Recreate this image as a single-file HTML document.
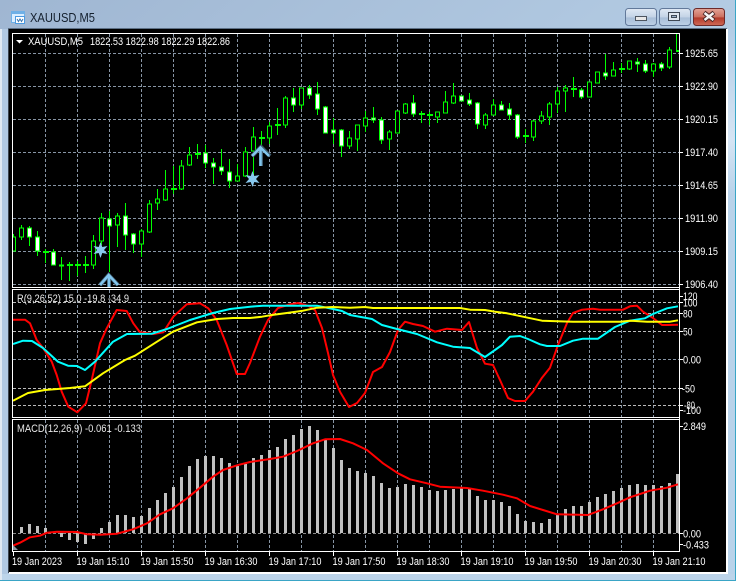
<!DOCTYPE html>
<html><head><meta charset="utf-8"><title>XAUUSD,M5</title>
<style>
html,body{margin:0;padding:0;background:#fff}
svg{display:block}
text{font-family:"Liberation Sans",sans-serif;font-size:11px;fill:#fff}
</style></head><body>
<svg width="737" height="582" viewBox="0 0 737 582" xmlns="http://www.w3.org/2000/svg">
<defs>
<linearGradient id="tb" x1="0" y1="0" x2="1" y2="1"><stop offset="0" stop-color="#9fb6d2"/><stop offset=".5" stop-color="#b3cbe3"/><stop offset="1" stop-color="#bcd4ea"/></linearGradient>
<linearGradient id="bt" x1="0" y1="0" x2="0" y2="1"><stop offset="0" stop-color="#e0e9f4"/><stop offset=".5" stop-color="#c3d3e6"/><stop offset=".55" stop-color="#a9bfd8"/><stop offset="1" stop-color="#bdd0e6"/></linearGradient>
<linearGradient id="cl" x1="0" y1="0" x2="0" y2="1"><stop offset="0" stop-color="#e3a598"/><stop offset=".5" stop-color="#cc6f5f"/><stop offset=".55" stop-color="#b33a2a"/><stop offset="1" stop-color="#cf6a58"/></linearGradient>
<linearGradient id="sd" x1="0" y1="0" x2="0" y2="1"><stop offset="0" stop-color="#b3cde6"/><stop offset=".2" stop-color="#d6e5f4"/><stop offset=".3" stop-color="#b9d3ea"/><stop offset="1" stop-color="#b9d3ea"/></linearGradient>
<clipPath id="cm"><rect x="13" y="34" width="666" height="253"/></clipPath>
<clipPath id="cr"><rect x="13" y="290" width="666" height="127"/></clipPath>
</defs>

<!-- window frame -->
<rect width="737" height="582" fill="#fff"/>
<rect x="0" y="0" width="735" height="581" fill="url(#tb)"/>
<rect x="0" y="29" width="2" height="551" fill="#dfe8f2"/>
<rect x="2" y="29" width="7" height="551" fill="#b0c8e2"/>
<rect x="728" y="29" width="7" height="551" fill="url(#sd)"/>
<rect x="2" y="574" width="733" height="6" fill="#bcd4ea"/>
<rect x="0" y="580" width="735" height="1" fill="#3aa5c6"/>
<rect x="735" y="0" width="1" height="581" fill="#3aa5c6"/>
<rect x="9" y="29" width="719" height="545" fill="#fff"/>
<rect x="9" y="29" width="717" height="543" fill="#000"/>
<rect x="8" y="29" width="1" height="544" fill="#39424e"/>
<rect x="8" y="28" width="719" height="1" fill="#5c6f85"/>

<!-- title icon -->
<path d="M11.500 11.500h13v11h-13z" fill="#dbeeff" stroke="#6fb0e6"/>
<path d="M11.500 11.500h13v2h-13z" fill="#6fb0e6" stroke="#6fb0e6"/>
<path d="M15.500 16.500h9v7h-9z" fill="#fff" stroke="#4c9ae0"/>
<path d="M17 19l1.500 2.500 1.500-2.500 1.500 2.500 1.500-2.500" fill="none" stroke="#3a76b0"/>
<text x="30" y="22" style="font-size:13px;fill:#14202e" textLength="65" lengthAdjust="spacingAndGlyphs">XAUUSD,M5</text>

<!-- window buttons -->
<rect x="625.500" y="8.500" width="31" height="17" rx="3" fill="url(#bt)" stroke="#62799a"/>
<rect x="635.500" y="16.500" width="11" height="4" fill="#e8e8e8" stroke="#4d5560"/>
<rect x="659.500" y="8.500" width="31" height="17" rx="3" fill="url(#bt)" stroke="#62799a"/>
<rect x="668.500" y="12.500" width="11" height="8" fill="#dfe6ee" stroke="#3f4854" stroke-width="1"/>
<rect x="671.500" y="15.500" width="5" height="2" fill="#9fb3ca" stroke="#3f4854"/>
<rect x="693.500" y="8.500" width="31" height="17" rx="3" fill="url(#cl)" stroke="#6d2a2a"/>
<path d="M704 12.500l5 4 5-4M704 20.500l5-4 5 4" fill="none" stroke="#4a2626" stroke-width="4.500"/>
<path d="M704.500 13l4.500 3.500 4.500-3.500M704.500 20l4.500-3.500 4.500 3.500" fill="none" stroke="#f4f4f4" stroke-width="2.500"/>

<!-- vertical grid -->
<g stroke="#8795a5" stroke-width="1" stroke-dasharray="3 2" fill="none">
<path d="M45.500 34V287M77.500 34V287M109.500 34V287M141.500 34V287M173.500 34V287M205.500 34V287M237.500 34V287M269.500 34V287M301.500 34V287M333.500 34V287M365.500 34V287M397.500 34V287M429.500 34V287M461.500 34V287M493.500 34V287M525.500 34V287M557.500 34V287M589.500 34V287M621.500 34V287M653.500 34V287"/>
<path d="M45.500 290V417M77.500 290V417M109.500 290V417M141.500 290V417M173.500 290V417M205.500 290V417M237.500 290V417M269.500 290V417M301.500 290V417M333.500 290V417M365.500 290V417M397.500 290V417M429.500 290V417M461.500 290V417M493.500 290V417M525.500 290V417M557.500 290V417M589.500 290V417M621.500 290V417M653.500 290V417"/>
<path d="M45.500 420V551M77.500 420V551M109.500 420V551M141.500 420V551M173.500 420V551M205.500 420V551M237.500 420V551M269.500 420V551M301.500 420V551M333.500 420V551M365.500 420V551M397.500 420V551M429.500 420V551M461.500 420V551M493.500 420V551M525.500 420V551M557.500 420V551M589.500 420V551M621.500 420V551M653.500 420V551"/>
<path d="M13 53.500H679M13 86.500H679M13 119.500H679M13 152.500H679M13 185.500H679M13 218.500H679M13 251.500H679M13 284.500H679"/>
</g>
<g stroke="#bcbcbc" stroke-width="1" stroke-dasharray="3 2" fill="none">
<path d="M13 302.500H679M13 313.500H679M13 331.500H679M13 388.500H679M13 405.500H679"/>
<path d="M13 359.500H679" stroke="#8795a5"/>
<path d="M13 533.500H679" stroke="#8a8a8a"/>
</g>

<!-- candles -->
<g clip-path="url(#cm)" fill="none" stroke="#00ff00" stroke-width="1" shape-rendering="crispEdges">
<path d="M13.500 234V251M21.500 225V240M29.500 226V246M37.500 231V256M45.500 249V263M53.500 249V265M61.500 257V280M69.500 262V281M77.500 261V276M85.500 256V273M93.500 235V269M101.500 213V245M109.500 211V272M117.500 213V247M125.500 203V250M133.500 233V253M141.500 229V257M149.500 200V233M157.500 189V210M165.500 170V201M173.500 166V194M181.500 160V190M189.500 147V166M197.500 144V159M205.500 145V168M213.500 158V184M221.500 149V175M229.500 159V188M237.500 164V181M245.500 147V177M253.500 127V177M261.500 131V145M269.500 122V144M277.500 108V135M285.500 96V128M293.500 88V112M301.500 88V109M309.500 85V99M317.500 82V115M325.500 106V133M333.500 118V144M341.500 129V157M349.500 131V149M357.500 125V151M365.500 111V132M373.500 107V123M381.500 117V144M389.500 130V150M397.500 111V133M405.500 103V114M413.500 95V117M421.500 111V123M429.500 112V125M437.500 112V123M445.500 91V113M453.500 83V104M461.500 96V101M469.500 93V106M477.500 102V129M485.500 113V129M493.500 99V115M501.500 101V110M509.500 103V120M517.500 114V139M525.500 129V143M533.500 120V141M541.500 111V124M549.500 102V125M557.500 87V113M565.500 85V112M573.500 77V97M581.500 88V99M589.500 82V97M597.500 72V83M605.500 54V80M613.500 62V76M621.500 63V73M629.500 61V70M637.500 58V72M645.500 60V73M653.500 63V77M661.500 62V71M669.500 47V69M676.500 34V51"/>
<!-- hollow bodies -->
<path fill="#000" d="M11.500 237h4v14h-4zM19.500 228h4v9h-4zM91.500 241h4v24h-4zM99.500 218h4v23h-4zM115.500 216h4v9h-4zM139.500 231h4v13h-4zM147.500 204h4v28h-4zM155.500 199h4v4h-4zM163.500 189h4v11h-4zM179.500 166h4v23h-4zM187.500 155h4v10h-4zM235.500 176h4v5h-4zM243.500 152h4v24h-4zM251.500 137h4v14h-4zM267.500 126h4v12h-4zM283.500 98h4v27h-4zM299.500 88h4v17h-4zM347.500 138h4v8h-4zM355.500 125h4v14h-4zM363.500 118h4v8h-4zM387.500 132h4v7h-4zM395.500 111h4v22h-4zM403.500 104h4v9h-4zM435.500 112h4v5h-4zM443.500 102h4v11h-4zM451.500 96h4v7h-4zM483.500 115h4v10h-4zM491.500 105h4v10h-4zM531.500 121h4v16h-4zM539.500 116h4v5h-4zM547.500 104h4v13h-4zM555.500 91h4v13h-4zM563.500 88h4v3h-4zM587.500 82h4v15h-4zM595.500 72h4v11h-4zM611.500 70h4v6h-4zM627.500 61h4v8h-4zM651.500 64h4v7h-4zM667.500 50h4v17h-4z"/>
<!-- white bodies -->
<path fill="#fff" d="M27.500 228h4v9h-4zM35.500 237h4v14h-4zM51.500 252h4v13h-4zM107.500 219h4v7h-4zM123.500 216h4v19h-4zM131.500 234h4v10h-4zM203.500 153h4v10h-4zM211.500 163h4v4h-4zM219.500 167h4v4h-4zM227.500 172h4v9h-4zM291.500 98h4v7h-4zM307.500 88h4v7h-4zM315.500 94h4v15h-4zM323.500 107h4v26h-4zM331.500 130h4v3h-4zM339.500 130h4v16h-4zM371.500 118h4v2h-4zM379.500 120h4v20h-4zM411.500 103h4v11h-4zM459.500 96h4v5h-4zM467.500 100h4v4h-4zM475.500 103h4v21h-4zM499.500 105h4v5h-4zM507.500 109h4v6h-4zM515.500 115h4v22h-4zM579.500 90h4v7h-4zM603.500 73h4v3h-4zM635.500 62h4v2h-4zM643.500 64h4v7h-4zM659.500 64h4v4h-4z"/>
<!-- doji -->
<path stroke-width="2" d="M43 252h6M59 265.500h5M67 265h6M75 265h6M83 265h6M171 189h6M195 154h6M259 138h6M275 125h6M419 114h6M427 115h6M523 136h6M571 89h6M619 69h6M676 51h4"/>
</g>

<!-- stars -->
<path d="M100.500 242L102.300 247 107.500 246 104 250 107.500 254 102.300 253 100.500 258 98.700 253 93.500 254 97 250 93.500 246 98.700 247z" fill="#88c8ee"/>
<path d="M252.500 171L254.300 176 259.500 175 256 179 259.500 183 254.300 182 252.500 187 250.700 182 245.500 183 249 179 245.500 175 250.700 176z" fill="#88c8ee"/>
<!-- arrows -->
<g fill="none">
<path d="M109 287V276M100 285L108.700 275L118 285" stroke="#3d5a6c" stroke-width="4"/>
<path d="M109 287V276M100 285L108.700 275L118 285" stroke="#82c6ee" stroke-width="2.500"/>
<path d="M261 166V149M252 156L261 147L270 156" stroke="#3d5a6c" stroke-width="4"/>
<path d="M260.500 166V149M252 156L260.500 147.500L269 156" stroke="#82c6ee" stroke-width="2.500"/>
</g>

<!-- RSI lines -->
<g clip-path="url(#cr)" fill="none" stroke-width="2" stroke-linejoin="round">
<polyline stroke="#ff0000" points="13,319.700 25,319.700 30,323.300 36.700,340 43.300,348.300 51.700,361.700 56.700,375 61.700,391.700 68.300,406.700 77.300,412.300 86,403.300 91.700,380 100,343.300 106.700,328.300 116.700,310 126.700,311 133.300,323.300 140,332.300 153.300,334 163.300,332.300 173.300,316.700 186.700,304.300 200,303.300 208.300,308.300 216.700,320 226.700,345 236.700,374 245,374 250,363 260,336.700 268,320 278,308 290,304.300 298,303 308,305.700 315,310 322,328 328,353 333,375 340,391.700 349,407 357,403 365,393 373,372 382,367 390,352 398,330 405,321.700 413,324 423,326 435,331.700 447,328.700 462,330 469,322 477,348 485,363.700 493,365 500,380 508,398 515,401 525,401 533,391.700 542,377.700 550,367.700 558,345 567,323 573,313 582,309.700 593,308.700 600,309.700 623,309.700 630,306.300 637,305.700 643,311.700 653,318 662,325 668,325 678,324.700"/>
<polyline stroke="#00ffff" points="13,344 23,340.700 32,341 43,348 58,361.700 68,365.700 77,366 85,370 95,361.700 113,341.700 127,334 152,333.700 167,329 190,320 213,313 230,309 250,306.700 263,305.700 317,305.700 333,309 342,311 350,315 372,319 382,325 397,329 417,334 437,342.300 453,346.700 470,348 485,357 495,350 502,345 510,336.700 520,336 528,339 540,344.300 547,346 560,346 573,340.700 583,338.700 598,338.700 615,327 630,320.700 645,318.300 653,314 667,308.300 678,306.300"/>
<polyline stroke="#ffff00" points="13,400.700 28,393 45,390 70,388 85,386.300 103,373.300 125,360 135,355.700 157,341.700 173,331.700 197,322.300 217,319 233,318 250,318 262,316.700 270,315.300 285,313.300 303,310.700 317,307.700 333,307 350,307.700 365,307 373,308 460,308 470,309.700 485,310 495,311.700 507,313.300 523,316.700 542,320.700 573,321.700 620,321.700 630,320.700 647,321.700 670,321.700 678,320.300"/>
</g>

<!-- MACD bars -->
<path fill="none" stroke="#c0c0c0" stroke-width="3" d="M21.500 527V533M29.500 524V533M37.500 526V533M45.500 528V533M53.500 532V533M61.500 533V537M69.500 533V540M77.500 533V542M85.500 533V544M93.500 533V539M101.500 528V533M109.500 522V533M117.500 515V533M125.500 515V533M133.500 517V533M141.500 516V533M149.500 508V533M157.500 500V533M165.500 493V533M173.500 487V533M181.500 477V533M189.500 466V533M197.500 459V533M205.500 456V533M213.500 456V533M221.500 458V533M229.500 463V533M237.500 466V533M245.500 464V533M253.500 458V533M261.500 455V533M269.500 450V533M277.500 447V533M285.500 439V533M293.500 435V533M301.500 429V533M309.500 426V533M317.500 430V533M325.500 440V533M333.500 448V533M341.500 460V533M349.500 468V533M357.500 471V533M365.500 473V533M373.500 476V533M381.500 483V533M389.500 488V533M397.500 487V533M405.500 484V533M413.500 485V533M421.500 487V533M429.500 490V533M437.500 491V533M445.500 490V533M453.500 489V533M461.500 488V533M469.500 489V533M477.500 496V533M485.500 500V533M493.500 500V533M501.500 502V533M509.500 506V533M517.500 514V533M525.500 521V533M533.500 522V533M541.500 523V533M549.500 519V533M557.500 515V533M565.500 509V533M573.500 506V533M581.500 506V533M589.500 502V533M597.500 497V533M605.500 494V533M613.500 491V533M621.500 488V533M629.500 485V533M637.500 484V533M645.500 485V533M653.500 485V533M661.500 486V533M669.500 483V533M677.500 474V533"/>
<polyline fill="none" stroke="#ff0000" stroke-width="2" stroke-linejoin="round" points="13,545.700 20,542.700 30,537.300 40,535.700 47,532.700 57,531.700 77,532 87,534.300 100,534.700 117,533.700 133,529.300 147,523.300 160,514.300 173,508.300 187,498.300 200,487.700 213,476.700 223,470 237,465.300 250,462 270,459 283,456.700 297,451 313,443.300 325,439.300 340,439 353,443.300 367,450 383,463.300 398,473.300 410,479.300 427,483.300 440,486.700 467,488 483,490.700 503,494.700 517,498.300 530,506 543,510 557,514.300 588,515 603,509.300 617,503.300 630,497.300 650,490.700 667,487.700 678,484.300"/>
<path d="M13 545L18 550H13z" fill="#8a949e"/>

<!-- panel borders -->
<g fill="#fff" shape-rendering="crispEdges">
<rect x="12" y="33" width="668" height="1"/>
<rect x="12" y="33" width="1" height="255"/>
<rect x="12" y="287" width="668" height="1"/>
<rect x="12" y="289" width="668" height="1"/>
<rect x="12" y="289" width="1" height="129"/>
<rect x="12" y="417" width="668" height="1"/>
<rect x="12" y="419" width="668" height="1"/>
<rect x="12" y="419" width="1" height="133"/>
<rect x="12" y="551" width="668" height="1"/>
<rect x="679" y="33" width="1" height="519"/>
<!-- price ticks -->
<path d="M680 53h3v1h-3zM680 86h3v1h-3zM680 119h3v1h-3zM680 152h3v1h-3zM680 185h3v1h-3zM680 218h3v1h-3zM680 251h3v1h-3zM680 284h3v1h-3zM680 296h3v1h-3zM680 302h3v1h-3zM680 313h3v1h-3zM680 331h3v1h-3zM680 359h3v1h-3zM680 388h3v1h-3zM680 405h3v1h-3zM680 410h3v1h-3zM680 426h3v1h-3zM680 533h3v1h-3zM680 544h3v1h-3z"/>
<!-- time ticks -->
<path d="M13 552h1v4h-1zM77 552h1v4h-1zM141 552h1v4h-1zM205 552h1v4h-1zM269 552h1v4h-1zM333 552h1v4h-1zM397 552h1v4h-1zM461 552h1v4h-1zM525 552h1v4h-1zM589 552h1v4h-1zM653 552h1v4h-1z"/>
</g>

<!-- legend -->
<path d="M16 40h7l-3.500 3.500z" fill="#fff"/>
<text x="28" y="45" textLength="55" lengthAdjust="spacingAndGlyphs">XAUUSD,M5</text>
<text x="90" y="45" textLength="140" lengthAdjust="spacingAndGlyphs">1822.53 1822.98 1822.29 1822.86</text>
<text x="17" y="302" textLength="112" lengthAdjust="spacingAndGlyphs" style="fill:#e8e8e8">R(9,26,52) 15.0 -19.8 -34.9</text>
<text x="17" y="432" textLength="124" lengthAdjust="spacingAndGlyphs" style="fill:#e8e8e8">MACD(12,26,9) -0.061 -0.133</text>

<!-- price labels -->
<g lengthAdjust="spacingAndGlyphs">
<text x="685" y="57" textLength="33" lengthAdjust="spacingAndGlyphs">1925.65</text>
<text x="685" y="90" textLength="33" lengthAdjust="spacingAndGlyphs">1922.90</text>
<text x="685" y="123" textLength="33" lengthAdjust="spacingAndGlyphs">1920.15</text>
<text x="685" y="156" textLength="33" lengthAdjust="spacingAndGlyphs">1917.40</text>
<text x="685" y="189" textLength="33" lengthAdjust="spacingAndGlyphs">1914.65</text>
<text x="685" y="222" textLength="33" lengthAdjust="spacingAndGlyphs">1911.90</text>
<text x="685" y="255" textLength="33" lengthAdjust="spacingAndGlyphs">1909.15</text>
<text x="685" y="288" textLength="33" lengthAdjust="spacingAndGlyphs">1906.40</text>
<text x="683" y="300" textLength="14.500" lengthAdjust="spacingAndGlyphs">120</text>
<text x="683" y="306.500" textLength="14.500" lengthAdjust="spacingAndGlyphs">100</text>
<text x="683" y="317.500" textLength="9.500" lengthAdjust="spacingAndGlyphs">80</text>
<text x="683" y="335.500" textLength="9.500" lengthAdjust="spacingAndGlyphs">50</text>
<text x="683" y="363.500" textLength="18" lengthAdjust="spacingAndGlyphs">0.00</text>
<text x="682" y="392.500" textLength="13" lengthAdjust="spacingAndGlyphs">-50</text>
<text x="684" y="409" textLength="11" lengthAdjust="spacingAndGlyphs">-80</text>
<text x="683" y="414" textLength="18" lengthAdjust="spacingAndGlyphs">-100</text>
<text x="683" y="430" textLength="23" lengthAdjust="spacingAndGlyphs">2.849</text>
<text x="683" y="537.500" textLength="18" lengthAdjust="spacingAndGlyphs">0.00</text>
<text x="683" y="548.500" textLength="26" lengthAdjust="spacingAndGlyphs">-0.433</text>
</g>

<!-- time labels -->
<g>
<text x="12" y="565" textLength="50" lengthAdjust="spacingAndGlyphs">19 Jan 2023</text>
<text x="76.500" y="565" textLength="53" lengthAdjust="spacingAndGlyphs">19 Jan 15:10</text>
<text x="140.500" y="565" textLength="53" lengthAdjust="spacingAndGlyphs">19 Jan 15:50</text>
<text x="204.500" y="565" textLength="53" lengthAdjust="spacingAndGlyphs">19 Jan 16:30</text>
<text x="268.500" y="565" textLength="53" lengthAdjust="spacingAndGlyphs">19 Jan 17:10</text>
<text x="332.500" y="565" textLength="53" lengthAdjust="spacingAndGlyphs">19 Jan 17:50</text>
<text x="396.500" y="565" textLength="53" lengthAdjust="spacingAndGlyphs">19 Jan 18:30</text>
<text x="460.500" y="565" textLength="53" lengthAdjust="spacingAndGlyphs">19 Jan 19:10</text>
<text x="524.500" y="565" textLength="53" lengthAdjust="spacingAndGlyphs">19 Jan 19:50</text>
<text x="588.500" y="565" textLength="53" lengthAdjust="spacingAndGlyphs">19 Jan 20:30</text>
<text x="652.500" y="565" textLength="53" lengthAdjust="spacingAndGlyphs">19 Jan 21:10</text>
</g>
</svg>
</body></html>
